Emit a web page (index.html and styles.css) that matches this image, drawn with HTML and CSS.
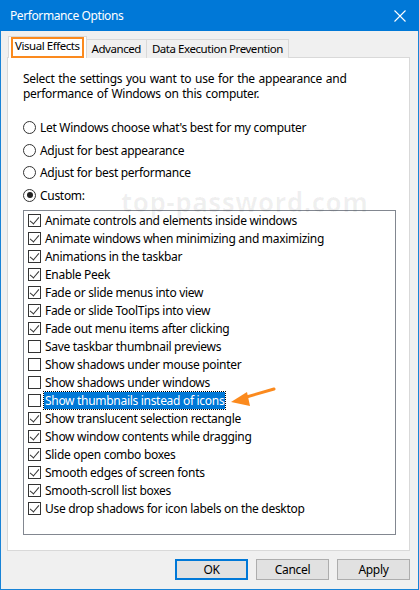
FILE: index.html
```html
<!DOCTYPE html>
<html>
<head>
<meta charset="utf-8">
<link rel="stylesheet" href="styles.css">
</head>
<body>
<div class="window">
  <div class="titlebar">
    <span class="title">Performance Options</span>
    <svg class="close" width="12" height="12" viewBox="0 0 12 12"><path d="M0.5 0.5 L11.5 11.5 M11.5 0.5 L0.5 11.5" stroke="#fff" stroke-width="1.1"/></svg>
  </div>
  <div class="content">
    <div class="tabs">
      <div class="tab selected">Visual Effects<span class="mark"></span></div>
      <div class="tab">Advanced</div>
      <div class="tab">Data Execution Prevention</div>
    </div>
    <div class="panel">
      <p class="intro">Select the settings you want to use for the appearance and performance of Windows on this computer.</p>
      <div class="radios">
        <div class="radio"><span class="rb"></span>Let Windows choose what's best for my computer</div>
        <div class="radio"><span class="rb"></span>Adjust for best appearance</div>
        <div class="radio"><span class="rb"></span>Adjust for best performance</div>
        <div class="radio"><span class="rb on"></span>Custom:</div>
      </div>
      <div class="list">
        <div class="item"><span class="cb on"></span><span class="lbl">Animate controls and elements inside windows</span></div>
        <div class="item"><span class="cb on"></span><span class="lbl">Animate windows when minimizing and maximizing</span></div>
        <div class="item"><span class="cb on"></span><span class="lbl">Animations in the taskbar</span></div>
        <div class="item"><span class="cb on"></span><span class="lbl">Enable Peek</span></div>
        <div class="item"><span class="cb on"></span><span class="lbl">Fade or slide menus into view</span></div>
        <div class="item"><span class="cb on"></span><span class="lbl">Fade or slide ToolTips into view</span></div>
        <div class="item"><span class="cb on"></span><span class="lbl">Fade out menu items after clicking</span></div>
        <div class="item"><span class="cb"></span><span class="lbl">Save taskbar thumbnail previews</span></div>
        <div class="item"><span class="cb"></span><span class="lbl">Show shadows under mouse pointer</span></div>
        <div class="item"><span class="cb"></span><span class="lbl">Show shadows under windows</span></div>
        <div class="item"><span class="cb"></span><span class="lbl sel">Show thumbnails instead of icons</span></div>
        <div class="item"><span class="cb on"></span><span class="lbl">Show translucent selection rectangle</span></div>
        <div class="item"><span class="cb on"></span><span class="lbl">Show window contents while dragging</span></div>
        <div class="item"><span class="cb on"></span><span class="lbl">Slide open combo boxes</span></div>
        <div class="item"><span class="cb on"></span><span class="lbl">Smooth edges of screen fonts</span></div>
        <div class="item"><span class="cb on"></span><span class="lbl">Smooth-scroll list boxes</span></div>
        <div class="item"><span class="cb on"></span><span class="lbl">Use drop shadows for icon labels on the desktop</span></div>
      </div>
    </div>
    <div class="buttons">
      <div class="btn default">OK</div>
      <div class="btn">Cancel</div>
      <div class="btn">Apply</div>
    </div>
  </div>
  <div class="watermark">top-password.com</div>
  <svg class="arrow" width="60" height="30" viewBox="0 0 60 30"><path d="M53 4 L22 13" stroke="#fb8a1e" stroke-width="3" stroke-linecap="round"/><polygon points="10,17 26,7 29,21" fill="#fb8a1e"/></svg>
</div>
</body>
</html>
```
FILE: styles.css
```css
* { box-sizing: border-box; }
html, body { margin: 0; padding: 0; }
body {
  width: 419px; height: 590px;
  font-family: "Noto Sans", sans-serif;
  font-size: 12px;
  letter-spacing: -0.3px;
  color: #000;
}
.window {
  position: relative;
  width: 419px; height: 590px;
  background: #f0f0f0;
  border: 1px solid #1883d7;
  border-top: none;
  display: flex; flex-direction: column;
}
.titlebar {
  height: 31px;
  margin: 0 -1px;
  background: #0078d7;
  color: #fff;
  display: flex; align-items: center; justify-content: space-between;
  padding: 0 13px 0 10px;
  font-size: 12px;
  letter-spacing: -0.4px;
}
.content {
  flex: 1;
  display: flex; flex-direction: column;
  padding: 6px 8px 0 6px;
}
.tabs {
  display: flex; align-items: flex-end;
  height: 21px;
  padding-left: 1px;
  margin-bottom: -1px;
  position: relative; z-index: 1;
  font-size: 11.5px;
  letter-spacing: -0.45px;
}
.tab {
  height: 19px;
  padding: 0 5px 0 5px;
  border: 1px solid #d9d9d9;
  border-bottom: none;
  border-left: none;
  background: #f0f0f0;
  line-height: 17px;
  white-space: nowrap;
}
.tab.selected {
  position: relative;
  height: 22px;
  border-left: 1px solid #d9d9d9;
  background: #fff;
  padding: 0 6px;
  line-height: 17px;
}
.mark {
  position: absolute;
  left: 2px; top: 0px; right: 2px; height: 21px;
  border: 2px solid #fb8a1e;
}
.panel {
  background: #fff;
  border: 1px solid #d9d9d9;
  height: 494px;
  padding: 13px 13px 0 15px;
}
.intro {
  margin: 0;
  line-height: 15px;
  width: 340px;
  word-spacing: 1px;
}
.radios {
  margin-top: 15px;
  display: flex; flex-direction: column; gap: 0;
}
.radio {
  height: 22.7px;
  display: flex; align-items: center;
}
.rb {
  width: 13px; height: 13px;
  border: 1px solid #333;
  border-radius: 50%;
  margin-right: 4px;
  background: #fff;
  position: relative;
  flex: none;
}
.rb.on::after {
  content: ""; position: absolute;
  left: 2.5px; top: 2.5px; width: 6px; height: 6px; border-radius: 50%;
  background: #222;
}
.list {
  margin-top: 3px;
  border: 1px solid #828790;
  height: 325px;
  padding-top: 1px;
  margin-right: 0;
}
.item {
  height: 18px;
  display: flex; align-items: center;
  padding-left: 4px;
}
.cb {
  width: 13px; height: 13px;
  border: 1px solid #333;
  background: #fff;
  flex: none;
  margin-right: 3px;
  position: relative;
}
.cb.on::after {
  content: ""; position: absolute;
  left: 3px; top: 0px; width: 4px; height: 8px;
  border-right: 1.4px solid #333; border-bottom: 1.4px solid #333;
  transform: rotate(40deg);
}
.lbl {
  padding: 0 1px;
  line-height: 17px;
  white-space: nowrap;
}
.lbl.sel {
  background: #0078d7;
  color: #fff;
  outline: 1px dotted #000;
}
.buttons {
  display: flex; justify-content: flex-end; gap: 8px;
  margin-top: 8px;
  padding-right: 0;
}
.btn {
  width: 73px; height: 21px;
  background: #e1e1e1;
  border: 1px solid #adadad;
  text-align: center;
  line-height: 19px;
}
.btn.default {
  border: 2px solid #0078d7;
  line-height: 17px;
}
.watermark {
  position: absolute;
  left: 120px; top: 184px;
  font-family: "Open Sans", sans-serif;
  font-weight: 700;
  font-size: 26px;
  color: rgba(0,0,0,0.06);
  letter-spacing: 0.5px;
  white-space: nowrap;
  pointer-events: none;
}
.arrow {
  position: absolute;
  left: 220px; top: 385px;
}
```
